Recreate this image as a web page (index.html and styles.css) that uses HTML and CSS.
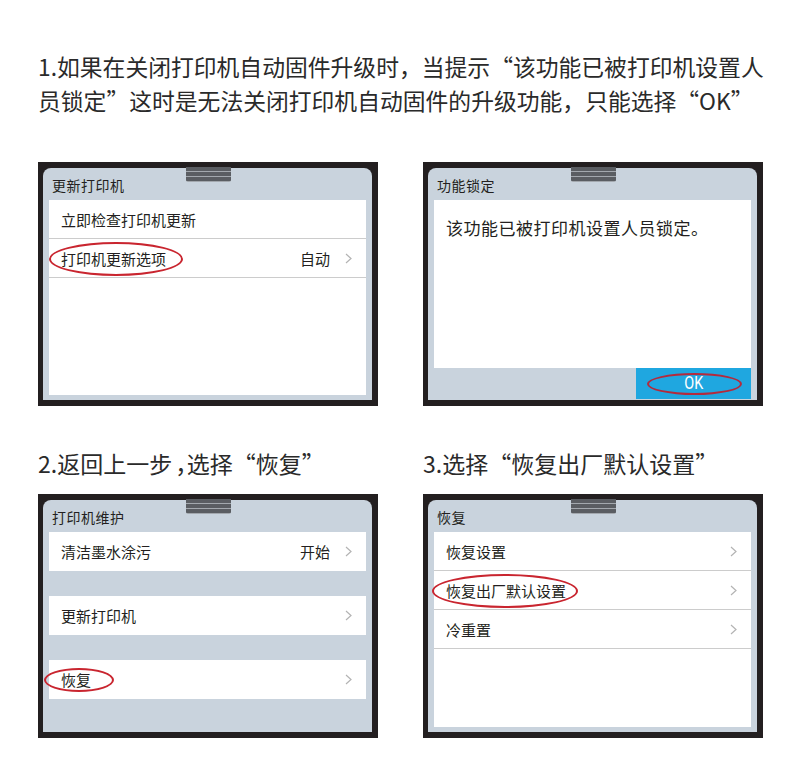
FILE: index.html
```html
<!DOCTYPE html>
<html lang="zh-CN">
<head>
  <meta charset="UTF-8">
  <meta name="viewport" content="width=device-width, initial-scale=1.0">
  <title>关闭打印机自动固件升级</title>
  <link rel="stylesheet" href="styles.css">
</head>
<body>
  <div class="page">
    <p class="intro">1.如果在关闭打印机自动固件升级时，当提示“该功能已被打印机设置人<br>员锁定”这时是无法关闭打印机自动固件的升级功能，只能选择“OK”</p>

    <div class="steps">
      <!-- 更新打印机 -->
      <div class="device">
        <div class="screen">
          <span class="handle"></span>
          <div class="title">更新打印机</div>
          <div class="body list">
            <div class="row"><span class="label">立即检查打印机更新</span></div>
            <div class="row">
              <span class="label">打印机更新选项</span>
              <span class="value">自动</span>
              <svg class="arrow" width="7" height="11" viewBox="0 0 7 11"><polyline points="1,1 6,5.5 1,10" /></svg>
              <span class="mark mark-update"></span>
            </div>
          </div>
        </div>
      </div>

      <!-- 功能锁定 -->
      <div class="device">
        <div class="screen">
          <span class="handle"></span>
          <div class="title">功能锁定</div>
          <div class="body msg">该功能已被打印机设置人员锁定。</div>
          <div class="footer">
            <div class="ok">
              <span class="ok-text">OK</span>
              <span class="mark mark-ok"></span>
            </div>
          </div>
        </div>
      </div>

      <div class="step">
        <p class="caption">2.返回上一步<span class="punct">，</span>选择“恢复”</p>
        <div class="device">
          <div class="screen">
            <span class="handle"></span>
            <div class="title">打印机维护</div>
            <div class="body groups">
              <div class="row">
                <span class="label">清洁墨水涂污</span>
                <span class="value">开始</span>
                <svg class="arrow" width="7" height="11" viewBox="0 0 7 11"><polyline points="1,1 6,5.5 1,10" /></svg>
              </div>
              <div class="row">
                <span class="label">更新打印机</span>
                <svg class="arrow" width="7" height="11" viewBox="0 0 7 11"><polyline points="1,1 6,5.5 1,10" /></svg>
              </div>
              <div class="row">
                <span class="label">恢复</span>
                <svg class="arrow" width="7" height="11" viewBox="0 0 7 11"><polyline points="1,1 6,5.5 1,10" /></svg>
                <span class="mark mark-restore"></span>
              </div>
            </div>
          </div>
        </div>
      </div>

      <div class="step">
        <p class="caption">3.选择“恢复出厂默认设置”</p>
        <div class="device">
          <div class="screen">
            <span class="handle"></span>
            <div class="title">恢复</div>
            <div class="body list">
              <div class="row">
                <span class="label">恢复设置</span>
                <svg class="arrow" width="7" height="11" viewBox="0 0 7 11"><polyline points="1,1 6,5.5 1,10" /></svg>
              </div>
              <div class="row">
                <span class="label">恢复出厂默认设置</span>
                <svg class="arrow" width="7" height="11" viewBox="0 0 7 11"><polyline points="1,1 6,5.5 1,10" /></svg>
                <span class="mark mark-factory"></span>
              </div>
              <div class="row">
                <span class="label">冷重置</span>
                <svg class="arrow" width="7" height="11" viewBox="0 0 7 11"><polyline points="1,1 6,5.5 1,10" /></svg>
              </div>
            </div>
          </div>
        </div>
      </div>
    </div>
  </div>
</body>
</html>
```

FILE: styles.css
```css
body{
  margin: 0;
  background: #fff;
  color: #231f20;
  font-family: "Noto Sans CJK SC", "Noto Sans", sans-serif;
}
.page{
  padding: 50px 37px 0 38px;
}
.intro,
.caption{
  margin: 0;
  font-size: 22.8px;
  line-height: 34px;
  color: #2a2a2a;
  white-space: nowrap;
}
.steps{
  display: grid;
  grid-template-columns: 340px 340px;
  column-gap: 45px;
  margin-top: 44px;
}
.caption{
  margin: 40px 0 14px;
  font-size: 23px;
}
.punct{
  padding-left: 3px;
  font-feature-settings: "halt";
}

.device{
  width: 340px;
  height: 244px;
  box-sizing: border-box;
  padding: 6px 6px 6px 5px;
  background: #231f20;
}
.screen{
  position: relative;
  height: 100%;
  display: flex;
  flex-direction: column;
  background: #c9d3dd;
  border-radius: 8px 8px 0 0;
}
.handle{
  position: absolute;
  top: -1px;
  left: 50%;
  margin-left: -22px;
  width: 45px;
  height: 15px;
  border-radius: 0 0 2px 2px;
  background: repeating-linear-gradient(to bottom, #5a5d62 0 4px, #a3a8ae 4px 5px);
}
.title{
  height: 32px;
  box-sizing: border-box;
  padding: 3px 0 0 9px;
  line-height: 29px;
  font-size: 14px;
  letter-spacing: .5px;
}
.body{
  flex: 1;
  margin: 0 6px 5px;
  background: #fff;
}
.row{
  position: relative;
  display: flex;
  align-items: center;
  height: 38px;
  padding: 0 14px 0 12px;
  font-size: 15px;
}
.list .row{
  border-bottom: 1px solid #cccccc;
}
.label{
  flex: 1;
}
.value{
  margin-right: 15px;
}
.arrow{
  fill: none;
  stroke: #b3b3b3;
  stroke-width: 1.2;
}

.groups{
  background: none;
}
.groups .row{
  height: 39px;
  margin-bottom: 25px;
  background: #fff;
}

.msg{
  margin-bottom: 0;
  padding: 15px 12px 0;
  font-size: 17px;
  line-height: 26px;
  letter-spacing: .5px;
}
.footer{
  display: flex;
  justify-content: flex-end;
  height: 31px;
  margin: 0 6px 1px;
}
.ok{
  position: relative;
  width: 115px;
  display: flex;
  justify-content: center;
  align-items: center;
  padding-bottom: 3px;
  box-sizing: border-box;
  background: #1fa7e0;
}
.ok-text{
  display: inline-block;
  font-family: Roboto, "Liberation Sans", sans-serif;
  font-size: 18px;
  color: #fff;
  transform: scaleX(.8);
}

.mark{
  position: absolute;
  box-sizing: border-box;
  border: 2px solid #c9252f;
  border-radius: 50%;
}
.mark-update{
  left: 0;
  top: 3px;
  width: 134px;
  height: 34px;
}
.mark-restore{
  left: -5px;
  top: 8px;
  width: 70px;
  height: 24px;
}
.mark-factory{
  left: -2px;
  top: 3px;
  width: 146px;
  height: 34px;
}
.mark-ok{
  left: 11px;
  top: 5px;
  width: 95px;
  height: 22px;
  border-color: #b42a3c;
}
```
